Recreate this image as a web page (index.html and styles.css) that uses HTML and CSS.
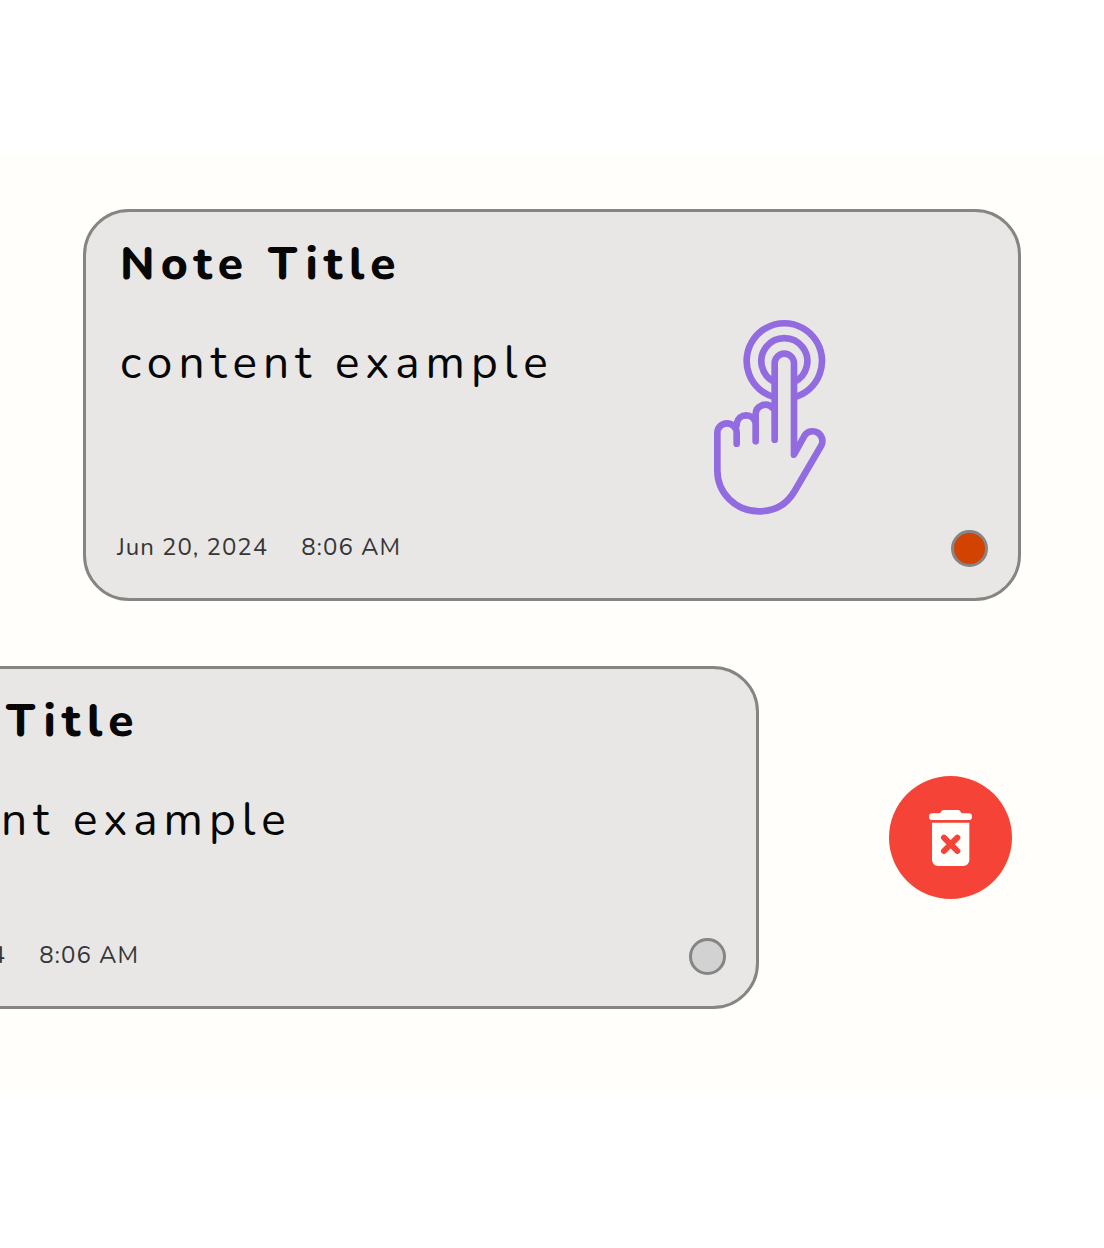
FILE: index.html
```html
<!DOCTYPE html>
<html lang="en">
<head>
<meta charset="utf-8">
<meta name="viewport" content="width=device-width, initial-scale=1">
<title>Notes</title>
<link rel="stylesheet" href="styles.css">
</head>
<body>
<main class="notes">
  <div class="row">
    <article class="card card-tall">
      <h2 class="title">Note Title</h2>
      <p class="content">content example</p>
      <footer class="meta">
        <time class="stamp"><span>Jun 20, 2024</span><span>8:06 AM</span></time>
        <span class="dot dot-active"></span>
      </footer>
      <svg class="tap" viewBox="39 27 342 591" aria-hidden="true">
        <path class="ring" d="M224 262A113 113 0 1 1 282 262M224 216A69 69 0 1 1 282 216"/>
        <path d="M224 389V160a29 29 0 0 1 58 0V434L313 378A29 29 0 0 1 363 408L284 543C262 581 225 604 177 604C107 604 52 550 52 481V369a29 29 0 0 1 58 0V401"/>
        <path d="M110 345V340a29 29 0 0 1 57 0V394V312a29 29 0 0 1 50 -19"/>
      </svg>
    </article>
  </div>
  <div class="row">
    <article class="card card-swiped">
      <h2 class="title">Note Title</h2>
      <p class="content">content example</p>
      <footer class="meta">
        <time class="stamp"><span>Jun 20, 2024</span><span>8:06 AM</span></time>
        <span class="dot"></span>
      </footer>
    </article>
    <button class="delete" type="button" aria-label="Delete note">
      <svg class="trash" viewBox="147 132 129 168" aria-hidden="true">
        <path class="trash-fill" d="M157 142H178C183 142 183 132 191 132H234C242 132 242 142 247 142H266a10 10 0 0 1 0 20H157a10 10 0 0 1 0-20ZM156 170H268V282a18 18 0 0 1-18 18H174a18 18 0 0 1-18-18Z"/>
        <path class="trash-cross" d="M192 215L232 255M232 215L192 255"/>
      </svg>
    </button>
  </div>
</main>
</body>
</html>
```
FILE: styles.css
```css
* {
  box-sizing: border-box;
}

body {
  margin: 0;
  padding: 155px 0;
  background: #fff;
  color: #070707;
  font-family: Nunito, Lato, sans-serif;
}

.notes {
  display: flex;
  flex-direction: column;
  gap: 65px;
  padding: 54px 83px 83px;
  overflow: hidden;
  background: #fffefa;
}

.row {
  display: flex;
  align-items: center;
  gap: 130px;
}

.card {
  position: relative;
  display: flex;
  flex: none;
  flex-direction: column;
  width: 100%;
  min-height: 343px;
  padding: 24px 30px 31px 31px;
  border: 3px solid #858583;
  border-radius: 46px;
  background: #e8e7e6;
}

.card-tall {
  min-height: 392px;
}

.card-swiped {
  margin-left: -262px;
}

.title,
.content {
  margin: 0;
  padding-left: 3px;
  font-size: 46px;
  line-height: 56px;
  white-space: nowrap;
}

.title {
  font-weight: 800;
  letter-spacing: 6px;
}

.content {
  margin-top: 43px;
  letter-spacing: 6px;
}

.meta {
  display: flex;
  justify-content: space-between;
  align-items: center;
  margin-top: auto;
}

.stamp {
  display: flex;
  gap: 33px;
  margin-bottom: 4px;
  color: #363636;
  font-size: 24px;
  line-height: 32px;
  letter-spacing: 1px;
  white-space: nowrap;
}

.dot {
  width: 37px;
  height: 37px;
  border: 3px solid #858583;
  border-radius: 50%;
  background: #d2d2d2;
}

.dot-active {
  background: #d24200;
}

.tap {
  position: absolute;
  top: 107px;
  right: 191px;
  width: 114px;
  height: 197px;
  fill: none;
  stroke: #936be0;
  stroke-width: 20;
  stroke-linecap: round;
  stroke-linejoin: round;
}

.ring {
  stroke-linecap: butt;
}

.delete {
  display: grid;
  flex: none;
  place-items: center;
  width: 123px;
  height: 123px;
  padding: 0;
  border: 0;
  border-radius: 50%;
  background: #f54437;
}

.trash {
  width: 43px;
  height: 56px;
}

.trash-fill {
  fill: #fffefa;
}

.trash-cross {
  fill: none;
  stroke: #f54437;
  stroke-width: 18;
  stroke-linecap: round;
}
```
